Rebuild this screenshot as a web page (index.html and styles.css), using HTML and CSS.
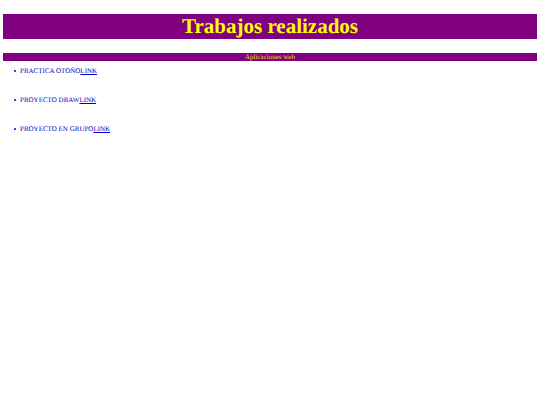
FILE: index.html
```html
<!DOCTYPE html>
<html lang="es">
<head>
  <meta charset="UTF-8">
  <title>Trabajos realizados</title>
  <link rel="stylesheet" href="styles.css">
</head>
<body>
  <h1 class="titulo">Trabajos realizados</h1>
  <div class="subtitulo">Aplicaciones web</div>
  <ul class="trabajos">
    <li>PRACTICA OTOÑO<a href="#">LINK</a></li>
    <li>PROYECTO DRAW<a href="#">LINK</a></li>
    <li>PROYECTO EN GRUPO<a href="#">LINK</a></li>
  </ul>
</body>
</html>
```
FILE: styles.css
```css
body {
  margin: 14px 3px;
  font-family: "Liberation Serif", "Times New Roman", serif;
  font-size: 7px;
  line-height: 8px;
  color: mediumblue;
  text-rendering: geometricPrecision;
}
.titulo {
  margin: 0 0 14px;
  background: purple;
  color: yellow;
  font-size: 21px;
  line-height: 25px;
  text-align: center;
}
.subtitulo {
  background: purple;
  color: gold;
  text-align: center;
}
.trabajos {
  margin: 6px 0;
  padding-left: 11px;
  list-style: none;
}
.trabajos li {
  margin-bottom: 21px;
}
.trabajos li::before {
  content: "";
  display: inline-block;
  width: 2px;
  height: 2px;
  margin-right: 4px;
  border-radius: 1px;
  background: mediumblue;
  vertical-align: 1px;
}
.trabajos a {
  color: mediumblue;
}
```
